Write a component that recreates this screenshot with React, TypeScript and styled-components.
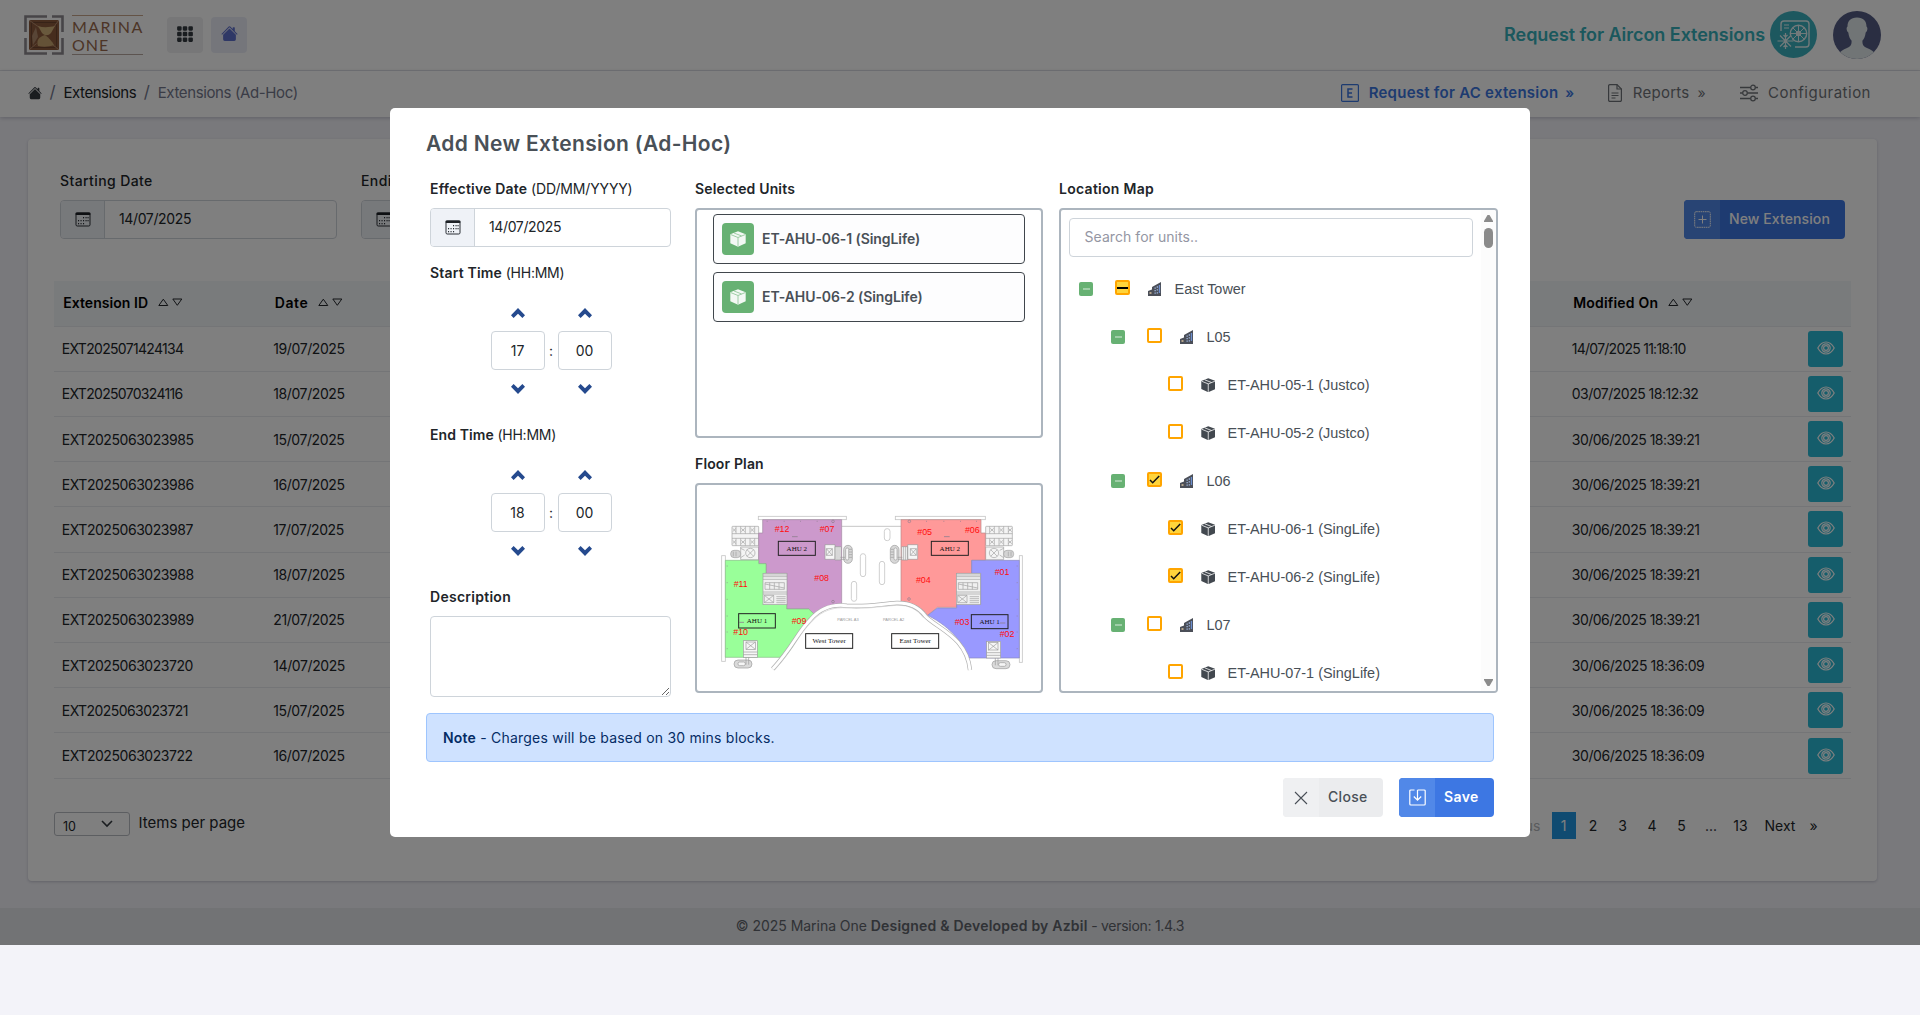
import React from 'react';
import styled, { createGlobalStyle, css } from 'styled-components';
import { BsHouseFill, BsGrid3X3GapFill } from 'react-icons/bs';

const GlobalStyle = createGlobalStyle`
  *, *::before, *::after { box-sizing: border-box; }
  body {
    margin: 0;
    background: #f3f3f9;
    color: #212529;
    font-family: Inter, "Noto Sans", sans-serif;
    font-size: 14px;
    line-height: 21px;
  }
  svg { display: block; flex: none; }
`;

const Text = styled.span<{ $ls?: number; $w?: number }>`
  letter-spacing: ${(p) => p.$ls ?? 0}px;
  font-weight: ${(p) => p.$w ?? 'inherit'};
  white-space: pre;
`;

/* ---------- page shell ---------- */

const Shell = styled.div`
  position: relative;
  height: 945px;
  display: flex;
  flex-direction: column;
  overflow: hidden;
`;

const TopBar = styled.header`
  height: 71px;
  flex: none;
  display: flex;
  align-items: center;
  padding: 0 39px 1px 24px;
  background: #fff;
  border-bottom: 1px solid #e3e5ea;
`;

const Logo = styled.div`
  display: flex;
  gap: 8px;
  margin-right: 24px;
  margin-top: 1px;
`;

const LogoWords = styled.div`
  width: 71px;
  height: 40px;
  padding-top: 2px;
  border-top: 1px solid #c9a68c;
  border-bottom: 1px solid #b9a8a0;
  color: #9a6b4e;
  font-family: Lato, sans-serif;
  font-size: 16px;
  line-height: 17.5px;
  display: flex;
  flex-direction: column;
`;

const SquareButton = styled.button<{ $tint: string; $color: string }>`
  width: 36px;
  height: 36px;
  margin-right: 8px;
  border: 0;
  border-radius: 4px;
  padding: 0 0 2px;
  display: flex;
  align-items: center;
  justify-content: center;
  background: ${(p) => p.$tint};
  color: ${(p) => p.$color};
`;

const AppName = styled.div`
  margin-left: auto;
  margin-right: 5px;
  font-size: 18px;
  font-weight: 600;
  color: #36b0ba;
`;

const AvatarSlot = styled.div`
  margin-left: 16px;
`;

const NavBar = styled.nav`
  height: 46px;
  flex: none;
  display: flex;
  align-items: center;
  padding: 0 49px 3px 28px;
  background: #fff;
  box-shadow: 0 1px 4px rgba(60, 60, 90, 0.28);
  font-size: 15px;
  z-index: 0;
`;

const Crumbs = styled.div`
  display: flex;
  align-items: center;
  color: #212529;
`;

const Slash = styled.span`
  width: 6px;
  margin: 0 8px 0 7.5px;
  color: #74788d;
  font-size: 17px;
`;

const Muted = styled.span`
  color: #74788d;
`;

const NavItem = styled.div<{ $active?: boolean; $gap: number }>`
  display: flex;
  align-items: center;
  gap: ${(p) => p.$gap}px;
  color: ${(p) => (p.$active ? '#3b76e1' : '#6f7378')};
  font-weight: ${(p) => (p.$active ? 600 : 400)};
`;

const NavMenu = styled.div`
  margin-left: auto;
  display: flex;
  gap: 34.5px;
`;

const Raquo = styled.span`
  margin-left: -3px;
  width: 8px;
  font-size: 14px;
`;

const Card = styled.main`
  margin: 22px 43px 0 28px;
  height: 742px;
  padding: 30.5px 26px 0;
  border-radius: 4px;
  background: #fff;
  box-shadow: 0 1px 3px rgba(60, 60, 90, 0.25);
`;

const Filters = styled.div`
  display: flex;
  align-items: flex-end;
  gap: 24px;
  padding: 0 6px;
  margin-bottom: 42px;
`;

const FilterField = styled.label`
  width: 277px;
  display: flex;
  flex-direction: column;
  gap: 9px;
  font-size: 14px;
  font-weight: 500;
`;

const DateBox = styled.div`
  height: 39px;
  display: flex;
  border: 1px solid #ced4da;
  border-radius: 4px;
  overflow: hidden;
  font-weight: 400;
`;

const DateAddon = styled.span`
  width: 44px;
  display: flex;
  align-items: center;
  justify-content: center;
  border-right: 1px solid #ced4da;
  background: #eff2f7;
`;

const DateValue = styled.span`
  flex: 1;
  padding-left: 14px;
  line-height: 36.5px;
`;

const LabelButton = styled.button<{ $tone: 'primary' | 'light'; $width: number }>`
  width: ${(p) => p.$width}px;
  height: 39px;
  border: 0;
  border-radius: 4px;
  padding: 0;
  display: flex;
  align-items: stretch;
  overflow: hidden;
  font: 500 14px/38px Inter, sans-serif;
  ${(p) =>
    p.$tone === 'primary'
      ? css`background: #3d77e3; color: #fff; --icon: #5188e8;`
      : css`background: #ebecee; color: #495057; --icon: #eff0f2;`}
`;

const ButtonIcon = styled.span`
  width: 36px;
  display: flex;
  align-items: center;
  justify-content: center;
  background: var(--icon);
`;

const ButtonText = styled.span`
  padding-left: 9px;
`;

const Push = styled.div`
  margin-left: auto;
`;

/* ---------- table ---------- */

const Row = styled.div<{ $head?: boolean }>`
  height: ${(p) => (p.$head ? 46 : 45.22)}px;
  display: grid;
  grid-template-columns: 211.5px 1298.5px 1fr 43px;
  align-items: center;
  border-bottom: 1px solid #e9ebef;
  ${(p) =>
    p.$head
      ? css`padding: 0 0 1.5px 9.2px; background: #f3f6f9; color: #000; font-weight: 600;`
      : css`padding-left: 7.8px;`}
`;

const HeadCell = styled.div`
  display: flex;
  align-items: center;
  gap: 9.5px;
`;

const ViewButton = styled.button`
  width: 35px;
  height: 36px;
  padding: 0 0 2px;
  border: 0;
  border-radius: 3px;
  background: #2abbd6;
  color: #fff;
  display: flex;
  align-items: center;
  justify-content: center;
`;

const TableFoot = styled.div`
  display: flex;
  align-items: flex-start;
  margin-top: 33px;
`;

const PageSize = styled.div`
  width: 76px;
  height: 24px;
  padding: 3px 16px 0 8px;
  display: flex;
  justify-content: space-between;
  border: 1px solid #b9bcc2;
  border-radius: 3px;
  font-size: 12.5px;
`;

const PageSizeNote = styled.span`
  margin-left: 8.5px;
  font-size: 15px;
`;

const Pager = styled.div`
  margin-left: auto;
  margin-right: 26px;
  display: flex;
  line-height: 27px;
`;

const PageLink = styled.span<{ $on?: boolean; $wide?: number }>`
  width: ${(p) => p.$wide ?? 24}px;
  margin-right: 5.5px;
  text-align: center;
  background: ${(p) => (p.$on ? '#2196e3' : 'transparent')};
  color: ${(p) => (p.$on ? '#fff' : 'inherit')};
`;

const Disabled = styled.span`
  margin-right: 11px;
  color: #b4b7bb;
`;

const Footer = styled.footer`
  margin-top: 27px;
  flex: 1;
  padding-top: 7px;
  text-align: center;
  background: #e4e6ea;
  color: #60646c;
`;

/* ---------- modal ---------- */

const Backdrop = styled.div`
  position: absolute;
  inset: 0;
  display: flex;
  justify-content: center;
  align-items: flex-start;
  padding-top: 108px;
  background: rgba(0, 0, 0, 0.5);
`;

const Dialog = styled.section`
  width: 1140px;
  height: 729px;
  padding: 21px 36px 0;
  border-radius: 5px;
  background: #fff;
`;

const Title = styled.h4`
  margin: 0 0 19px;
  font-size: 21px;
  line-height: 30px;
  font-weight: 600;
  color: #495057;
`;

const Columns = styled.div`
  display: flex;
  margin-left: 4px;
  height: 535px;
`;

const Column = styled.div<{ $w: number; $gap?: number }>`
  flex: none;
  width: ${(p) => p.$w}px;
  margin-right: ${(p) => p.$gap ?? 0}px;
`;

const Label = styled.div<{ $top?: number }>`
  margin-top: ${(p) => p.$top ?? 0}px;
  margin-bottom: 9px;
  font-weight: 600;
`;

const TimePicker = styled.div`
  display: grid;
  grid-template-columns: 54px 13px 54px;
  grid-template-rows: 37px 39px 37px;
  justify-content: center;
  align-items: center;
  justify-items: center;
  margin-top: 11px;
  margin-bottom: 17px;
  padding-left: 1px;
`;

const TimeBox = styled.span`
  width: 54px;
  height: 39px;
  border: 1px solid #ced4da;
  border-radius: 4px;
  text-align: center;
  line-height: 37px;
`;

const Notes = styled.textarea`
  display: block;
  width: 241px;
  height: 81px;
  border: 1px solid #ced4da;
  border-radius: 4px;
  background: #fff;
  resize: vertical;
`;

const Panel = styled.div<{ $h: number }>`
  height: ${(p) => p.$h}px;
  border: 2px solid #acb5be;
  border-radius: 4px;
  overflow: hidden;
`;

const UnitList = styled.div`
  padding: 4px 16px;
  display: flex;
  flex-direction: column;
  gap: 8px;
`;

const UnitCard = styled.div`
  height: 50px;
  display: flex;
  align-items: center;
  gap: 8px;
  padding: 0 8px;
  border: 1px solid #40464c;
  border-radius: 4px;
  background: #fdfdfe;
  color: #495057;
  font-weight: 600;
`;

const UnitName = styled.span`
  padding-bottom: 1px;
  white-space: pre;
  letter-spacing: -0.08px;
`;

const UnitBadge = styled.span`
  width: 32px;
  height: 32px;
  border-radius: 4px;
  background: #67b173;
  display: flex;
  align-items: center;
  justify-content: center;
`;

const TreePanel = styled(Panel)`
  display: flex;
  justify-content: space-between;
`;

const TreeBody = styled.div`
  padding: 8px 0 0 8px;
`;

const Search = styled.div`
  width: 404px;
  height: 39px;
  margin-bottom: 8px;
  padding-left: 14.5px;
  border: 1px solid #ced4da;
  border-radius: 4px;
  color: #9496a3;
  line-height: 36px;
`;

const TreeRow = styled.div<{ $level: number }>`
  height: 48px;
  display: flex;
  align-items: center;
  padding-left: ${(p) => [10, 42, 98.5][p.$level]}px;
  font: 14.45px "Liberation Sans", Arial, sans-serif;
  color: #495057;
`;

const Expander = styled.span`
  width: 14px;
  height: 14px;
  margin-right: 22px;
  border-radius: 2px;
  background: #67b173;
  display: flex;
  align-items: center;
  justify-content: center;
  &::after {
    content: '';
    width: 7px;
    height: 2px;
    background: #9fcea7;
  }
`;

const Check = styled.span<{ $fill?: boolean }>`
  width: 15px;
  height: 15px;
  margin-bottom: 3px;
  margin-right: 18px;
  border: 2px solid #ffa500;
  border-radius: 2px;
  background: ${(p) => (p.$fill ? '#ffd43b' : '#fff')};
`;

const TreeIcon = styled.span<{ $gap: number }>`
  margin-right: ${(p) => p.$gap}px;
`;

const Scrollbar = styled.div`
  width: 15px;
  padding: 5px 0 5px;
  display: flex;
  flex-direction: column;
  align-items: center;
  background: #fcfcfc;
`;

const Thumb = styled.div`
  width: 9px;
  height: 20px;
  margin-top: 6px;
  margin-bottom: auto;
  border-radius: 5px;
  background: #8b8b8b;
`;

const Alert = styled.div`
  height: 49px;
  padding-left: 16px;
  border: 1px solid #9ec5fe;
  border-radius: 4px;
  background: #cfe2ff;
  color: #052c65;
  line-height: 47px;
`;

const Actions = styled.div`
  margin-top: 16px;
  display: flex;
  justify-content: flex-end;
  gap: 16px;
`;

/* ---------- drawings ---------- */

const LogoMark = () => (
  <svg width="40" height="40" viewBox="0 0 40 40">
    <g fill="none" stroke="#8f8b90" strokeWidth="2.600">
      <path d="M1.500 17V1.500H23M28 1.500h10.500V17M38.500 23v15.500H28M23 38.500H1.500V23" />
    </g>
    <rect x="5" y="5" width="30" height="30" rx="1.500" fill="#8c5a3c" />
    <rect x="7.500" y="7.500" width="25" height="25" fill="none" stroke="#6e4630" strokeWidth="1" />
    <path d="M5.500 5.500l10 7M34.500 5.500l-5 7M5.500 34.500l7-6M34.500 34.500l-6-5" stroke="#c49a7a" strokeWidth=".8" />
    <path d="M14 11c6 2 12 1 17 0l-4 7c-3 3-6 3-9 0z" fill="#d3b27a" />
    <path d="M14 31c-2-6 1-9 7-11 4 3 7 6 9 10-5 2-11 2-16 1z" fill="#c9a56f" />
    <path d="M8 21l4-9 2 10-5 8z" fill="#b08a6c" />
  </svg>
);

const CalendarIcon = () => (
  <svg width="16" height="15" viewBox="0 0 16 15">
    <rect x="1" y="1" width="14" height="13" rx="1.200" fill="none" stroke="#2a2f35" />
    <rect x=".5" y=".5" width="15" height="2.500" rx="1" fill="#1d2126" />
    <g fill="#2a2f35">
      {[5, 8, 11].map((y, r) =>
        [3, 5.5, 8, 10.5, 12.5].map((x, c) =>
          (r === 0 && c < 2) || (r === 2 && c > 2) ? null : <rect key={`${x}-${y}`} x={x} y={y} width="1.100" height="1.300" />,
        ),
      )}
    </g>
  </svg>
);

const SortIcon = () => (
  <svg width="25" height="9" viewBox="0 0 25 9" fill="none" stroke="#23272b" strokeWidth="1">
    <path d="M.8 7.500h9L5.300 1.200zM14.800 1h9l-4.500 6.300z" />
  </svg>
);

const EyeIcon = () => (
  <svg width="18" height="14" viewBox="0 0 18 14" fill="none" stroke="currentColor" strokeWidth="1.200">
    <path d="M.8 7C3 3 6 1 9 1s6 2 8.200 6C15 11 12 13 9 13S3 11 .8 7z" />
    <circle cx="9" cy="7" r="4.200" />
    <circle cx="9" cy="7" r="2.400" />
  </svg>
);

const AirconBadge = () => (
  <svg width="47" height="47" viewBox="0 0 47 47" fill="none" stroke="#e3f3f5" strokeWidth="1.400">
    <circle cx="23.500" cy="23.500" r="23.500" fill="#3bb0be" stroke="none" />
    <path d="M11 20V13a3 3 0 0 1 3-3h22a3 3 0 0 1 3 3v20a3 3 0 0 1-3 3H25" />
    <path d="M14 14h5M14 17h5" strokeWidth="1.200" />
    <circle cx="28.500" cy="22.500" r="8.200" />
    <circle cx="28.500" cy="22.500" r="2" />
    <path d="M28.500 14.300v16.400M20.300 22.500h16.400M22.700 16.700l11.600 11.600M34.300 16.700L22.700 28.300" strokeWidth="1" />
    <circle cx="15.500" cy="30" r="7" fill="#3bb0be" stroke="none" />
    <path d="M15.500 22v16M7.500 30h16M10 24.500l11 11M21 24.500l-11 11M13.500 24l2 2 2-2M13.500 36l2-2 2 2" strokeWidth="1.200" />
  </svg>
);

const Avatar = () => (
  <svg width="48" height="48" viewBox="0 0 48 48">
    <clipPath id="round"><circle cx="24" cy="24" r="24" /></clipPath>
    <g clipPath="url(#round)">
      <rect width="48" height="48" fill="#545c84" />
      <path d="M24 6.500c6.500 0 9.500 3.500 9.500 9 1.500 1 1 5-.8 6-.5 4-1.700 6.500-3.200 8-.5 4 1 6 4.500 7.500 4 1.500 7 3.500 8.500 6V50H5.500v-7c1.500-2.500 4.500-4.500 8.500-6 3.500-1.500 5-3.500 4.500-7.500-1.500-1.500-2.700-4-3.200-8-1.800-1-2.300-5-.8-6 0-5.500 3-9 9.500-9z" fill="#e3eaec" />
    </g>
  </svg>
);

const BoxedE = () => (
  <svg width="18" height="18" viewBox="0 0 18 18" fill="none" stroke="currentColor" strokeWidth="1.200">
    <rect x=".6" y=".6" width="16.800" height="16.800" rx="1" />
    <path d="M11.500 5H7v8h4.500M7 9h4" strokeWidth="1.500" />
  </svg>
);

const ReportIcon = () => (
  <svg width="14" height="18" viewBox="0 0 14 18" fill="none" stroke="currentColor" strokeWidth="1.200">
    <path d="M9 .6H2a1.300 1.300 0 0 0-1.400 1.400v14A1.300 1.300 0 0 0 2 17.400h10a1.300 1.300 0 0 0 1.400-1.400V5z" />
    <path d="M9 .6V5h4.400M3.500 9h7M3.500 11.500h7M3.500 14h4" />
  </svg>
);

const SlidersIcon = () => (
  <svg width="18" height="18" viewBox="0 0 18 18" fill="none" stroke="currentColor" strokeWidth="1.300">
    <path d="M0 3.500h10.500M15.500 3.500H18M0 9h2.500M7.500 9H18M0 14.500h10.500M15.500 14.500H18" />
    <circle cx="13" cy="3.500" r="2.300" /><circle cx="5" cy="9" r="2.300" /><circle cx="13" cy="14.500" r="2.300" />
  </svg>
);

const Chevron = ({ down }: { down?: boolean }) => (
  <svg width="14" height="10" viewBox="0 0 14 10" fill="#254a8e">
    <path d={down ? 'M2.600 0L7 4.300 11.400 0 14 2.800 7 10 0 2.800z' : 'M2.600 10L7 5.700 11.400 10 14 7.200 7 0 0 7.200z'} />
  </svg>
);

const CubeIcon = ({ color, seam, size = 15 }: { color: string; seam: string; size?: number }) => (
  <svg width={size} height={size} viewBox="0 0 15 15">
    <path d="M7.500 .3L14.700 3v8.500L7.500 14.700.3 11.500V3z" fill={color} />
    <path d="M.6 3.300l6.900 2.800 6.900-2.800M7.500 6.100v8.300M3.800 1.900l7 2.700" fill="none" stroke={seam} strokeWidth=".8" />
  </svg>
);

const BuildingIcon = () => (
  <svg width="14" height="14" viewBox="0 0 14 14">
    <path d="M0 14V9l4-1.500V5L13 0v14z" fill="#4b4f58" />
    <path d="M6.500 5.500h1.300v1.300H6.500zM8.700 4.300H10v1.400H8.700zM6.500 8h1.300v1.300H6.500zM8.700 7.300H10v1.300H8.700zM6.500 10.500h1.300v1.300H6.500zM8.700 10.200H10v1.300H8.700z" fill="#9db4dc" />
    <path d="M10.800 3h1.300v8h-1.300z" fill="#6d8fcf" />
    <path d="M1.500 10h2v2h-2z" fill="#b5a58c" />
  </svg>
);

const Tick = () => (
  <svg width="11" height="11" viewBox="0 0 11 11" fill="none" stroke="#111" strokeWidth="1.500">
    <path d="M1 6l2.700 2.700L10.200 2" />
  </svg>
);

const Dash = () => (
  <svg width="11" height="11" viewBox="0 0 11 11"><rect y="5" width="11" height="2" fill="#000" /></svg>
);

const ArrowHead = ({ down }: { down?: boolean }) => (
  <svg width="9" height="7" viewBox="0 0 9 7" fill="#8b8b8b">
    <path d={down ? 'M0 0h9v1L5.500 7h-2L0 1z' : 'M0 7h9V6L5.500 0h-2L0 6z'} />
  </svg>
);

const PlusIcon = () => (
  <svg width="17" height="17" viewBox="0 0 17 17" fill="none" stroke="#fff" strokeWidth="1">
    <rect x=".7" y=".7" width="15.600" height="15.600" rx="1.500" strokeDasharray="1.600 .6" />
    <path d="M8.500 4.500v8M4.500 8.500h8" />
  </svg>
);

const CrossIcon = () => (
  <svg width="14" height="14" viewBox="0 0 14 14" stroke="#495057" strokeWidth="1.100"><path d="M1 1l12 12M13 1L1 13" /></svg>
);

const SaveIcon = () => (
  <svg width="17" height="17" viewBox="0 0 17 17" fill="none" stroke="#fff" strokeWidth="1.200">
    <path d="M5.500 1H1.800a1 1 0 0 0-1 1v13a1 1 0 0 0 1 1h13.400a1 1 0 0 0 1-1V2a1 1 0 0 0-1-1H8.500M8.500 1v10M4.800 7.500l3.700 3.700 3.700-3.700" />
  </svg>
);

const Lift = ({ x, y, flip }: { x: number; y: number; flip?: boolean }) => (
  <g transform={`translate(${x} ${y})${flip ? ' scale(-1 1)' : ''}`} fill="#f4f4f4" stroke="#a2a2a2" strokeWidth="2">
    <rect x="0" y="0" width="80" height="58" rx="2" />
    <path d="M0 22h80M0 36h80M12 0v22M26 0v22M40 0v22M54 0v22M68 0v22M12 36v22M26 36v22M40 36v22M54 36v22M68 36v22" />
    <path d="M2 6l10 10M12 6L2 16M28 6l10 10M38 6L28 16M56 6l10 10M66 6L56 16M2 42l10 10M12 42L2 52M28 42l10 10M38 42L28 52M56 42l10 10M66 42L56 52" />
    <path d="M26 62h54v38H26z" />
    <circle cx="55" cy="80" r="14" /><path d="M45 70l20 20M65 70L45 90" />
    <rect x="-4" y="72" width="30" height="22" rx="10" fill="#d4d4d4" /><path d="M4 76v14M12 76v14M26 66l12 6M26 94l12-8" />
  </g>
);

const Core = ({ x, y }: { x: number; y: number }) => (
  <g transform={`translate(${x} ${y})`} fill="#f0f0f0" stroke="#a0a0a0" strokeWidth="2">
    <rect width="72" height="94" />
    <path d="M0 5h72M0 10h72M0 18h72M6 28h58v20H6zM6 32l58 12M20 28v20M34 28v20M48 28v20M0 56h72M0 62h72M4 66h28v22H4zM4 66l28 22M32 66L4 88M40 70h28M40 76h28M40 82h28M40 88h28" />
  </g>
);

const Stair = ({ x, y, flip }: { x: number; y: number; flip?: boolean }) => (
  <g transform={`translate(${x} ${y})${flip ? ' scale(-1 1)' : ''}`} fill="#f6f6f6" stroke="#9c9c9c" strokeWidth="2">
    <path d="M0 0h30v44H0zM30 6h18v40H30zM4 12h18v20H4zM4 12l18 20M22 12L4 32M36 6v40M42 6v40" />
    <rect x="56" y="2" width="26" height="54" rx="13" fill="#d8d8d8" />
    <rect x="62" y="10" width="9" height="36" rx="4" />
    <path d="M46 38h14M46 44h14M72 14h9M72 22h9M72 30h9M72 38h9" />
  </g>
);

const Shaft = ({ x, y, flip }: { x: number; y: number; flip?: boolean }) => (
  <g transform={`translate(${x} ${y})${flip ? ' scale(-1 1)' : ''}`} fill="#f6f6f6" stroke="#9c9c9c" strokeWidth="2">
    <rect x="0" y="0" width="42" height="50" /><rect x="8" y="4" width="28" height="22" /><path d="M8 4l28 22M36 4L8 26M0 34h42M0 42h42" />
    <rect x="-28" y="58" width="54" height="24" rx="12" fill="#dadada" /><rect x="-16" y="64" width="22" height="11" rx="5" /><path d="M8 50v22M16 50v22" />
  </g>
);

const TAGS: [string, number, number][] = [
  ['#12', 276, 245], ['#07', 411, 246], ['#08', 395, 393], ['#11', 152, 410], ['#09', 327, 523], ['#10', 152, 556],
  ['#05', 704, 256], ['#06', 847, 248], ['#04', 700, 400], ['#01', 936, 376], ['#03', 816, 524], ['#02', 951, 562],
];

const BOXES: [string, number, number, number, number][] = [
  ['AHU 2', 265, 274, 111, 42], ['AHU 2', 724, 274, 111, 42], ['AHU 1', 146, 491, 110, 43], ['AHU 1', 844, 494, 110, 42],
  ['West Tower', 347, 551, 141, 44], ['East Tower', 605, 551, 141, 44],
];

const CURVE = 'M248 657C310 590 320 550 362 508C390 475 430 462 470 467C530 472 570 462 620 459C660 458 685 470 705 497C740 535 830 560 840 660';

const FloorPlan = () => (
  <svg width="344" height="206" viewBox="21 105 1032 618">
    <g fill="#fff" stroke="#c6c6c6" strokeWidth="2.500">
      <rect x="205" y="199" width="264" height="10" />
      <rect x="616" y="199" width="270" height="10" />
      <rect x="95" y="317" width="11" height="317" />
      <rect x="988" y="317" width="9" height="320" />
      <path d="M455 229h178" stroke="#bcbcbc" fill="none" />
      <rect x="583" y="236" width="17" height="36" rx="8" />
      <rect x="511" y="311" width="16" height="69" rx="8" />
      <rect x="568" y="334" width="16" height="70" rx="8" />
      <rect x="484" y="394" width="16" height="60" rx="8" />
    </g>
    <Lift x={126} y={229} />
    <Lift x={967} y={229} flip />
    <path d="M218 209H455V460Q420 462 372 492L356 477H290V370H228V341H206V249H218z" fill="#cc99cc" stroke="#a18aa1" strokeWidth="2" />
    <path d="M106 331H206V341H228V370H222V463H290V477H356L372 492C330 530 320 590 280 622H106z" fill="#99ff99" stroke="#88b988" strokeWidth="2" />
    <path d="M633 209H873V249H886V331H845V370H800V472H742L713 496C695 472 665 457 633 455z" fill="#ff9999" stroke="#b98a8a" strokeWidth="2" />
    <path d="M845 331H988V624H835C820 585 790 535 713 496L742 474H800V463H872V370H845z" fill="#9999ff" stroke="#8a8ab9" strokeWidth="2" />
    <path d={CURVE} fill="none" stroke="#b0b0b0" strokeWidth="13" />
    <path d={CURVE} fill="none" stroke="#fff" strokeWidth="9" />
    <path d="M254 660C314 594 324 556 368 512C396 482 432 470 472 474C530 478 570 469 620 466C660 465 680 478 700 503" fill="none" stroke="#c2c2c2" strokeWidth="1.500" />
    <Core x={219} y={370} />
    <Core x={799} y={370} />
    <Stair x={405} y={284} />
    <Stair x={683} y={284} flip />
    <Shaft x={160} y={572} />
    <Shaft x={932} y={574} flip />
    <g fill="none" stroke="#8f7f8f" strokeWidth="2">
      {[230, 281, 330, 380, 708, 760, 810, 858].map((x) => <path key={x} d={`M${x} 214h3`} />)}
      {[348, 398, 448, 498, 546, 596].map((y) => <path key={y} d={`M110 ${y}h3M980 ${y}h3`} />)}
      <circle cx="429" cy="214" r="4" /><circle cx="429" cy="455" r="4" /><circle cx="658" cy="214" r="4" /><circle cx="657" cy="447" r="4" />
      <path d="M306 260h17M762 260h17M148 517h14M930 519h16" strokeWidth="2.500" />
    </g>
    <g fill="#9a9a9a" fontFamily="Liberation Sans, sans-serif" fontSize="12" textAnchor="middle">
      <text x="474" y="512">PARCEL A3</text>
      <text x="611" y="514">PARCEL A2</text>
    </g>
    {BOXES.map(([label, x, y, w, h]) => (
      <g key={`${x}`}>
        <rect x={x} y={y} width={w} height={h} fill={label.endsWith('Tower') ? '#fff' : 'none'} stroke="#222" strokeWidth="3" />
        <text x={x + w / 2} y={y + h / 2 + 7} textAnchor="middle" fontFamily="Liberation Serif, serif" fontSize="21" fill="#111">{label}</text>
      </g>
    ))}
    <g fill="#ff0d0d" fontFamily="Liberation Sans, sans-serif" fontSize="26.500" textAnchor="middle">
      {TAGS.map(([label, x, y]) => <text key={label} x={x} y={y}>{label}</text>)}
    </g>
  </svg>
);

/* ---------- data ---------- */

const ROWS: [string, string, string][] = [
  ['EXT2025071424134', '19/07/2025', '14/07/2025 11:18:10'],
  ['EXT2025070324116', '18/07/2025', '03/07/2025 18:12:32'],
  ['EXT2025063023985', '15/07/2025', '30/06/2025 18:39:21'],
  ['EXT2025063023986', '16/07/2025', '30/06/2025 18:39:21'],
  ['EXT2025063023987', '17/07/2025', '30/06/2025 18:39:21'],
  ['EXT2025063023988', '18/07/2025', '30/06/2025 18:39:21'],
  ['EXT2025063023989', '21/07/2025', '30/06/2025 18:39:21'],
  ['EXT2025063023720', '14/07/2025', '30/06/2025 18:36:09'],
  ['EXT2025063023721', '15/07/2025', '30/06/2025 18:36:09'],
  ['EXT2025063023722', '16/07/2025', '30/06/2025 18:36:09'],
];

/* the digit one is narrow, so strings rich in it are set tighter */
const tracking = (s: string, step: number, base: number) => base - step * (s.split('1').length - 1);

type TreeNode = { level: 0 | 1 | 2; name: string; state?: 'on' | 'some' };
const TREE: TreeNode[] = [
  { level: 0, name: 'East Tower', state: 'some' },
  { level: 1, name: 'L05' },
  { level: 2, name: 'ET-AHU-05-1 (Justco)' },
  { level: 2, name: 'ET-AHU-05-2 (Justco)' },
  { level: 1, name: 'L06', state: 'on' },
  { level: 2, name: 'ET-AHU-06-1 (SingLife)', state: 'on' },
  { level: 2, name: 'ET-AHU-06-2 (SingLife)', state: 'on' },
  { level: 1, name: 'L07' },
  { level: 2, name: 'ET-AHU-07-1 (SingLife)' },
];

const DateInput = () => (
  <DateBox>
    <DateAddon><CalendarIcon /></DateAddon>
    <DateValue><Text $ls={-0.37}>14/07/2025</Text></DateValue>
  </DateBox>
);

const Time = ({ h, m }: { h: string; m: string }) => (
  <TimePicker>
    <Chevron /><span /><Chevron />
    <TimeBox>{h}</TimeBox><span>:</span><TimeBox>{m}</TimeBox>
    <Chevron down /><span /><Chevron down />
  </TimePicker>
);

export default function App() {
  return (
    <>
      <GlobalStyle />
      <Shell>
        <TopBar>
          <Logo>
            <LogoMark />
            <LogoWords>
              <Text $ls={1.4}>MARINA</Text>
              <Text $ls={1}>ONE</Text>
            </LogoWords>
          </Logo>
          <SquareButton $tint="#eeeef0" $color="#343a40"><BsGrid3X3GapFill size={18} /></SquareButton>
          <SquareButton $tint="#ebedf7" $color="#5f70cc"><BsHouseFill size={17} /></SquareButton>
          <AppName><Text $ls={-0.05}>Request for Aircon Extensions</Text></AppName>
          <AirconBadge />
          <AvatarSlot><Avatar /></AvatarSlot>
        </TopBar>
        <NavBar>
          <Crumbs>
            <BsHouseFill size={14} color="#343a40" />
            <Slash>/</Slash>
            <Text $ls={-0.45}>Extensions</Text>
            <Slash>/</Slash>
            <Muted><Text $ls={-0.38}>Extensions (Ad-Hoc)</Text></Muted>
          </Crumbs>
          <NavMenu>
            <NavItem $active $gap={10}><BoxedE /><Text $ls={0.25}>Request for AC extension</Text><Raquo>»</Raquo></NavItem>
            <NavItem $gap={11}><ReportIcon /><Text $ls={0.24}>Reports</Text><Raquo>»</Raquo></NavItem>
            <NavItem $gap={10}><SlidersIcon /><Text $ls={0.5}>Configuration</Text></NavItem>
          </NavMenu>
        </NavBar>
        <Card>
          <Filters>
            <FilterField><Text $ls={0.4}>Starting Date</Text><DateInput /></FilterField>
            <FilterField><Text $ls={0.4}>Ending Date</Text><DateInput /></FilterField>
            <Push>
              <LabelButton $tone="primary" $width={161}>
                <ButtonIcon><PlusIcon /></ButtonIcon>
                <ButtonText><Text $ls={0.1}>New Extension</Text></ButtonText>
              </LabelButton>
            </Push>
          </Filters>
          <Row $head>
            <HeadCell><Text $ls={0.06}>Extension ID</Text><SortIcon /></HeadCell>
            <HeadCell><Text $ls={0.62}>Date</Text><SortIcon /></HeadCell>
            <HeadCell><Text $ls={0.19}>Modified On</Text><SortIcon /></HeadCell>
          </Row>
          {ROWS.map(([id, date, modified]) => (
            <Row key={id}>
              <Text $ls={tracking(id, 0.12, -0.45)}>{id}</Text>
              <Text $ls={-0.41}>{date}</Text>
              <Text $ls={tracking(modified, 0.08, -0.35)}>{modified}</Text>
              <ViewButton><EyeIcon /></ViewButton>
            </Row>
          ))}
          <TableFoot>
            <PageSize>
              <span>10</span>
              <svg width="12" height="16" viewBox="0 0 12 16" fill="none" stroke="#343a40" strokeWidth="1.600"><path d="M1 5l5 5 5-5" /></svg>
            </PageSize>
            <PageSizeNote>Items per page</PageSizeNote>
            <Pager>
              <Disabled>Previous</Disabled>
              <PageLink $on>1</PageLink>
              <PageLink>2</PageLink>
              <PageLink>3</PageLink>
              <PageLink>4</PageLink>
              <PageLink>5</PageLink>
              <PageLink>...</PageLink>
              <PageLink>13</PageLink>
              <PageLink $wide={44}>Next</PageLink>
              <PageLink $wide={12}>»</PageLink>
            </Pager>
          </TableFoot>
        </Card>
        <Footer>
          <Text $ls={-0.04}>© 2025 Marina One </Text>
          <Text $ls={0.21} $w={600}>Designed & Developed by Azbil</Text>
          <Text $ls={-0.28}> - version: 1.4.3</Text>
        </Footer>

        <Backdrop>
          <Dialog>
            <Title><Text $ls={0.33}>Add New Extension (Ad-Hoc)</Text></Title>
            <Columns>
              <Column $w={241} $gap={24}>
                <Label><Text $ls={0.2}>Effective Date</Text><Text $w={400} $ls={-0.15}> (DD/MM/YYYY)</Text></Label>
                <DateInput />
                <Label $top={15}><Text $ls={0.18}>Start Time</Text><Text $w={400} $ls={-0.25}> (HH:MM)</Text></Label>
                <Time h="17" m="00" />
                <Label><Text $ls={0.08}>End Time</Text><Text $w={400} $ls={-0.25}> (HH:MM)</Text></Label>
                <Time h="18" m="00" />
                <Label><Text $ls={0.27}>Description</Text></Label>
                <Notes />
              </Column>
              <Column $w={348} $gap={16}>
                <Label><Text $ls={0.15}>Selected Units</Text></Label>
                <Panel $h={230}>
                  <UnitList>
                    {['ET-AHU-06-1 (SingLife)', 'ET-AHU-06-2 (SingLife)'].map((name) => (
                      <UnitCard key={name}>
                        <UnitBadge><CubeIcon color="#f3f8f4" seam="#8fc698" size={16} /></UnitBadge>
                        <UnitName>{name}</UnitName>
                      </UnitCard>
                    ))}
                  </UnitList>
                </Panel>
                <Label $top={15}><Text $ls={0.15}>Floor Plan</Text></Label>
                <Panel $h={210}><FloorPlan /></Panel>
              </Column>
              <Column $w={439}>
                <Label><Text $ls={0.28}>Location Map</Text></Label>
                <TreePanel $h={485}>
                  <TreeBody>
                    <Search><Text $ls={0.06}>Search for units..</Text></Search>
                    {TREE.map(({ level, name, state }) => (
                      <TreeRow key={name} $level={level}>
                        {level < 2 && <Expander />}
                        <Check $fill={!!state}>{state === 'on' ? <Tick /> : state === 'some' ? <Dash /> : null}</Check>
                        <TreeIcon $gap={12.5}>
                          {level < 2 ? <BuildingIcon /> : <CubeIcon color="#42484f" seam="#fff" size={14.5} />}
                        </TreeIcon>
                        <Text>{name}</Text>
                      </TreeRow>
                    ))}
                  </TreeBody>
                  <Scrollbar><ArrowHead /><Thumb /><ArrowHead down /></Scrollbar>
                </TreePanel>
              </Column>
            </Columns>
            <Alert><Text $w={600} $ls={0.19}>Note</Text><Text $ls={0.22}> - Charges will be based on 30 mins blocks.</Text></Alert>
            <Actions>
              <LabelButton $tone="light" $width={100}>
                <ButtonIcon><CrossIcon /></ButtonIcon>
                <ButtonText><Text $ls={0.3}>Close</Text></ButtonText>
              </LabelButton>
              <LabelButton $tone="primary" $width={95}>
                <ButtonIcon><SaveIcon /></ButtonIcon>
                <ButtonText><Text $ls={0.39} $w={600}>Save</Text></ButtonText>
              </LabelButton>
            </Actions>
          </Dialog>
        </Backdrop>
      </Shell>
    </>
  );
}
